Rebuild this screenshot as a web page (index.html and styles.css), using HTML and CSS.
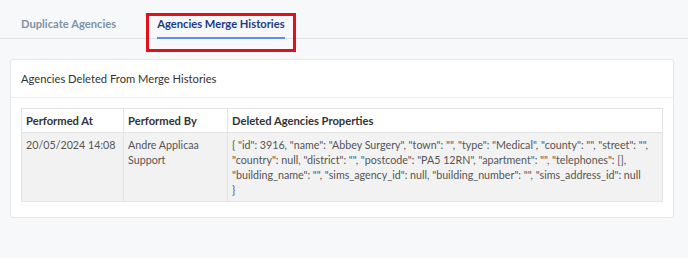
FILE: index.html
```html
<!DOCTYPE html>
<html lang="en">
<head>
    <meta charset="UTF-8">
    <meta name="viewport" content="width=device-width, initial-scale=1.0">
    <title>Agencies Merge Histories</title>
    <link rel="stylesheet" href="styles.css">
</head>
<body>
    <!-- tabs across the top -->
    <nav class="tabs">
        <a class="tab">Duplicate Agencies</a>
        <a class="tab active">Agencies Merge Histories</a>
    </nav>

    <div class="card">
        <div class="card-header">Agencies Deleted From Merge Histories</div>
        <div class="card-body">
            <table class="history-table">
                <thead>
                    <tr>
                        <th class="col-at">Performed At</th>
                        <th class="col-by">Performed By</th>
                        <th>Deleted Agencies Properties</th>
                    </tr>
                </thead>
                <tbody>
                    <tr>
                        <td>20/05/2024 14:08</td>
                        <td>Andre Applicaa Support</td>
                        <td>{ "id": 3916, "name": "Abbey Surgery", "town": "", "type": "Medical", "county": "", "street": "", "country": null, "district": "", "postcode": "PA5 12RN", "apartment": "", "telephones": [], "building_name": "", "sims_agency_id": null, "building_number": "", "sims_address_id": null<br>}</td>
                    </tr>
                </tbody>
            </table>
        </div>
    </div>
</body>
</html>
```

FILE: styles.css
```css
body {
    margin: 0;
    background-color: #f7f8fa;
    font-family: Lato, "Open Sans", sans-serif;
    font-size: 11.2px;
    color: #333;
}
.tabs {
    display: flex;
    gap: 41px;
    height: 38px;
    padding-left: 21px;
    border-bottom: 1px solid #e1e4e8;
}
.tab {
    position: relative;
    display: block;
    padding-top: 17px;
    font-weight: bold;
    color: #7f92a8;
    cursor: pointer;
}
.tab.active {
    color: #1f3a86;
}
.tab.active::before {
    /* underline of the selected tab */
    content: "";
    position: absolute;
    left: 0;
    right: 0;
    top: 37px;
    height: 2px;
    background-color: #5b8df6;
}
.tab.active::after {
    /* red highlight box drawn over the tab */
    content: "";
    position: absolute;
    left: -11px;
    right: -11px;
    top: 13px;
    height: 33px;
    border: 3px solid #e3101c;
}
.card {
    margin: 20px 14px 0 10px;
    background: white;
    border: 1px solid #e3e6ea;
    border-radius: 3px;
}
.card-header {
    padding: 11px 10px 11px 10px;
    line-height: 15px;
    border-bottom: 1px solid #eceef1;
}
.card-body {
    padding: 10px 10px 15px 10px;
}
.history-table {
    width: 100%;
    border-collapse: collapse;
    table-layout: fixed;
}
.history-table th,
.history-table td {
    border: 1px solid #e3e3e3;
    padding: 4px 4px;
    line-height: 15px;
    text-align: left;
    vertical-align: top;
}
.history-table th {
    background: white;
    color: #333;
}
.history-table td {
    background-color: #f2f2f2;
    color: #555;
    font-size: 10.7px;
}
.col-at {
    width: 93px;
}
.col-by {
    width: 95px;
}
```
